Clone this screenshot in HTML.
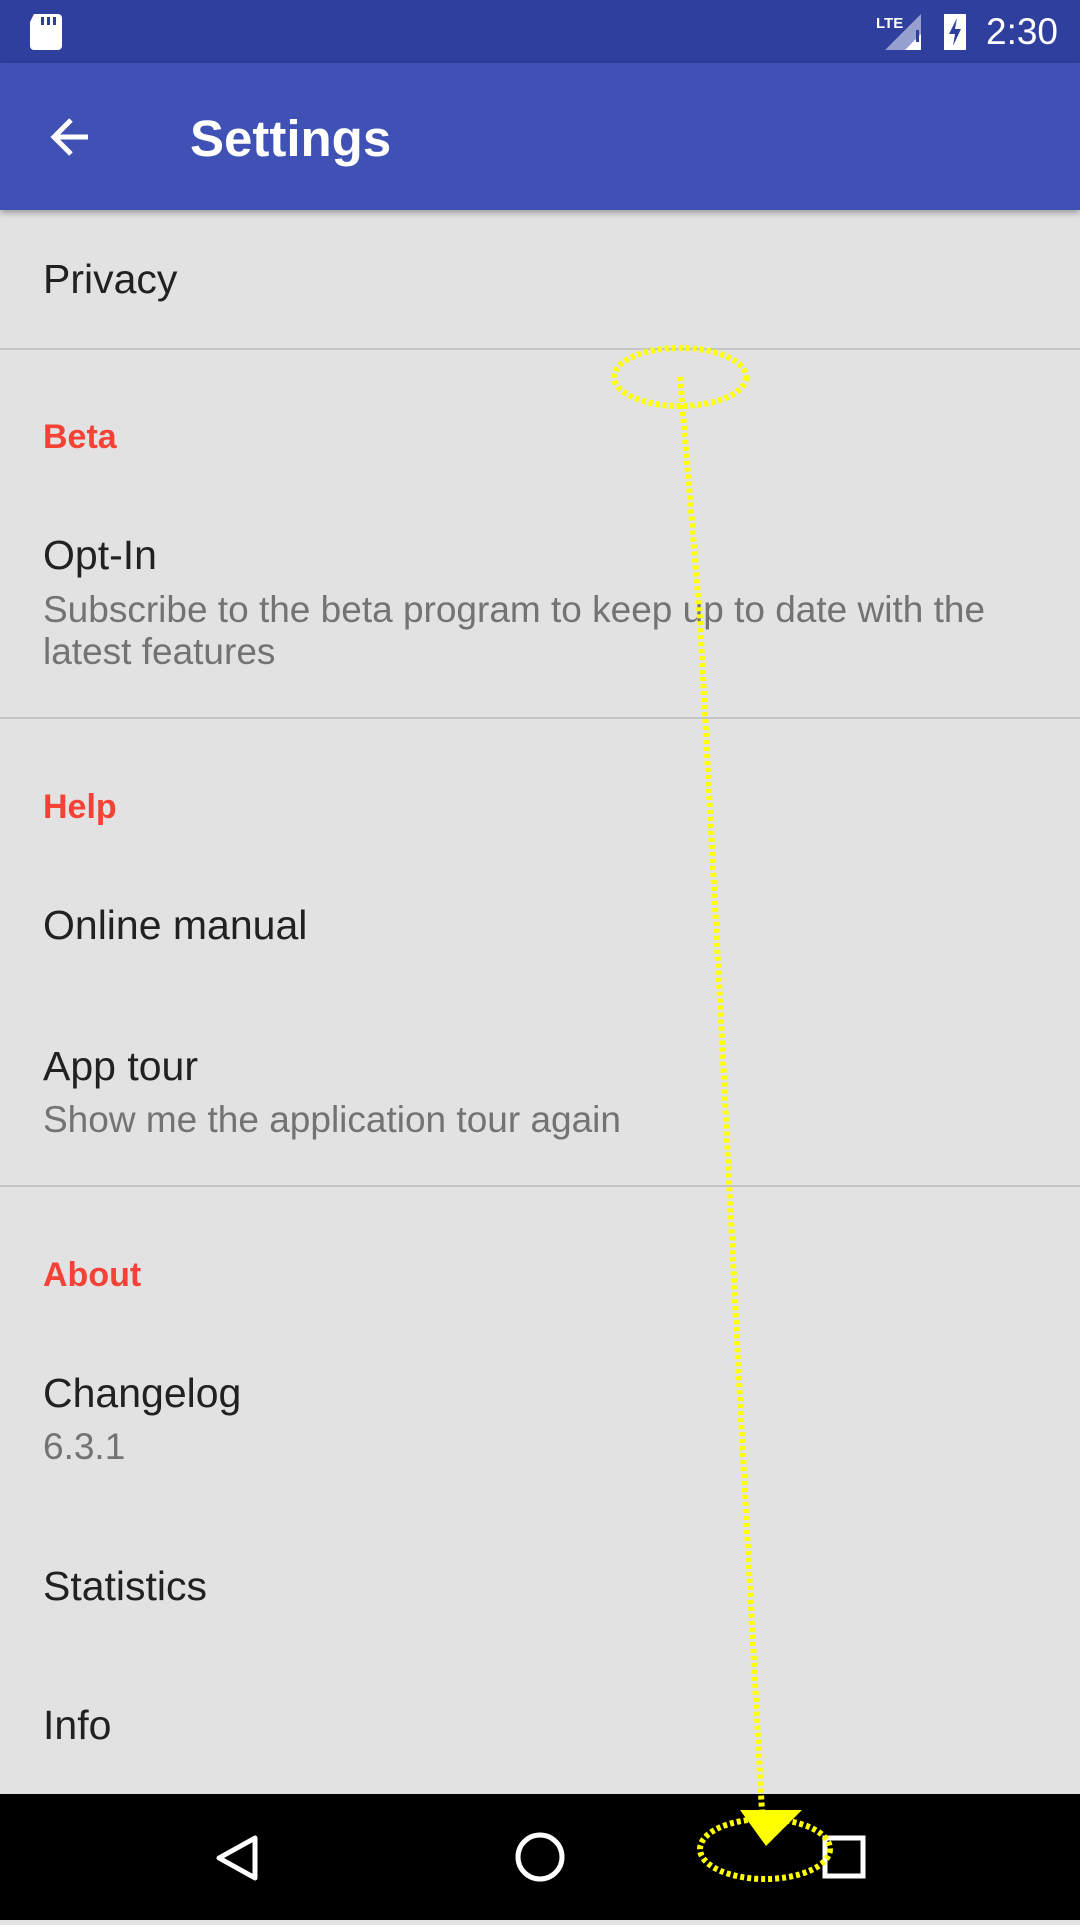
<!DOCTYPE html>
<html><head><meta charset="utf-8"><style>
*{margin:0;padding:0;box-sizing:border-box}
body{width:1080px;height:1920px;background:#e2e2e2;font-family:"Liberation Sans",Roboto,sans-serif;position:relative;overflow:hidden}
.sb{position:absolute;top:0;left:0;width:1080px;height:63px;background:#2f3f9e}
.ab{position:absolute;top:63px;left:0;width:1080px;height:147px;background:#3f51b5;box-shadow:0 3px 6px rgba(0,0,0,.3)}
.t{position:absolute;left:43px;color:#212121;font-size:41px;line-height:1}
.s{position:absolute;left:43px;color:#737373;font-size:37px;line-height:1}
.c{position:absolute;left:43px;color:#f44336;font-size:34px;font-weight:bold;line-height:1}
.d{position:absolute;left:0;width:1080px;height:2px;background:#c4c4c4}
.nb{position:absolute;top:1794px;left:0;width:1080px;height:126px;background:#000}
</style></head><body>
<div class="sb">
<svg width="1080" height="63" style="position:absolute;top:0;left:0">
<path d="M34 14h24a4 4 0 0 1 4 4v28a4 4 0 0 1-4 4H34a4 4 0 0 1-4-4V22z" fill="#fff"/>
<rect x="41" y="17" width="3" height="8" fill="#2f3f9e"/><rect x="47" y="17" width="3" height="8" fill="#2f3f9e"/><rect x="53" y="17" width="3" height="8" fill="#2f3f9e"/>
<text x="876" y="28" fill="#fff" font-size="15" font-weight="bold" font-family="Liberation Sans">LTE</text>
<path d="M921 14v36h-36z" fill="#fff" opacity=".5"/><path d="M905 50l16-16v16z" fill="#fff"/>
<rect x="916" y="30" width="3" height="12" fill="#2f3f9e"/>
<rect x="944" y="14" width="22" height="36" fill="#fff"/><path d="M957 18l-8 16h6l-2 12 8-17h-6z" fill="#2f3f9e"/>
<text x="986" y="44" fill="#fff" font-size="37" font-family="Liberation Sans">2:30</text>
</svg></div>
<div class="ab">
<svg width="60" height="60" style="position:absolute;left:44px;top:44px"><path d="M44 30H10M27 13L10 30l17 17" stroke="#fff" stroke-width="5" fill="none"/></svg>
<div style="position:absolute;left:190px;top:46px;color:#fff;font-size:51px;font-weight:bold">Settings</div>
</div>
<div class="t" style="top:259px">Privacy</div>
<div class="d" style="top:348px"></div>
<div class="c" style="top:420px">Beta</div>
<div class="t" style="top:535px">Opt-In</div>
<div class="s" style="top:591px">Subscribe to the beta program to keep up to date with the</div>
<div class="s" style="top:633px">latest features</div>
<div class="d" style="top:717px"></div>
<div class="c" style="top:790px">Help</div>
<div class="t" style="top:905px">Online manual</div>
<div class="t" style="top:1046px">App tour</div>
<div class="s" style="top:1101px">Show me the application tour again</div>
<div class="d" style="top:1185px"></div>
<div class="c" style="top:1258px">About</div>
<div class="t" style="top:1373px">Changelog</div>
<div class="s" style="top:1428px">6.3.1</div>
<div class="t" style="top:1566px">Statistics</div>
<div class="t" style="top:1705px">Info</div>
<div class="nb"><svg width="1080" height="126">
<path d="M255 1838l-36 20 36 20z" transform="translate(0,-1794)" stroke="#fff" stroke-width="5" fill="none" stroke-linejoin="round"/>
<circle cx="540" cy="63" r="22" stroke="#fff" stroke-width="5" fill="none"/>
<rect x="825" y="44" width="38" height="38" stroke="#fff" stroke-width="5" fill="none"/>
</svg></div>
<svg width="1080" height="1920" style="position:absolute;top:0;left:0">
<g stroke="#ffff00" stroke-width="6" stroke-dasharray="4 3" fill="none">
<ellipse cx="680" cy="377" rx="66" ry="29"/>
<path d="M680 377L700 620 720 1000 740 1400 762 1812"/>
<ellipse cx="765" cy="1849" rx="65" ry="30"/>
</g>
<path d="M740 1810h62l-36 36z" fill="#ffff00"/>
</svg>
</body></html>
